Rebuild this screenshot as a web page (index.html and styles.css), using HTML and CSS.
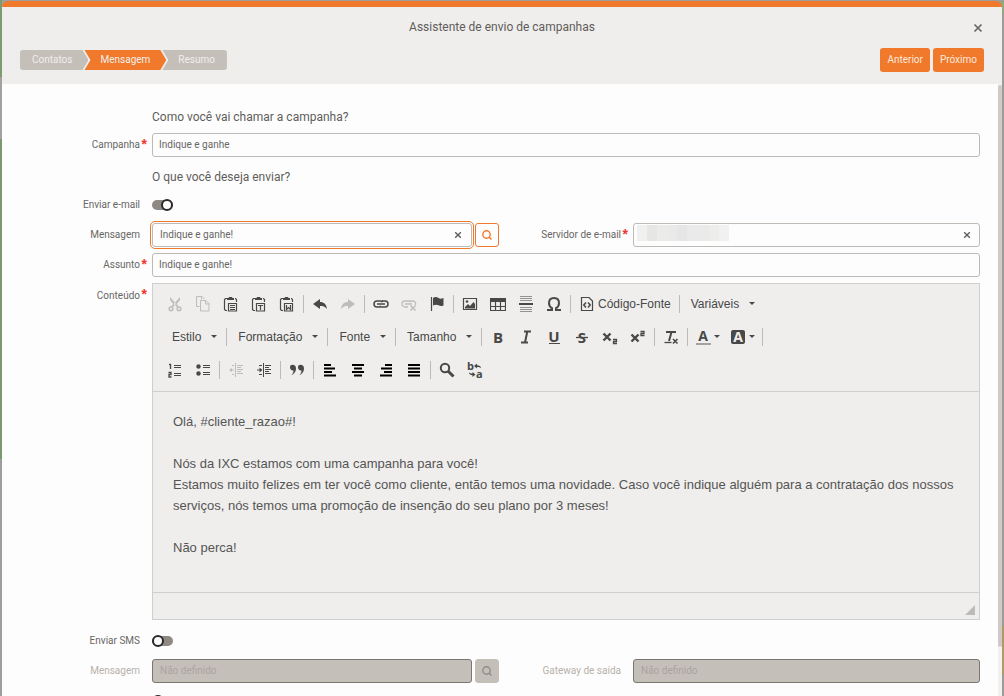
FILE: index.html
```html
<!DOCTYPE html>
<html lang="pt-BR">
<head>
<meta charset="utf-8">
<meta name="viewport" content="width=device-width, initial-scale=1">
<title>Assistente de envio de campanhas</title>
<link rel="stylesheet" href="styles.css">
</head>
<body class="page">
<svg class="sprite" aria-hidden="true">
  <symbol id="close" viewBox="0 0 10 10"><path d="M1.500 1.500l7 7M8.500 1.500l-7 7" fill="none" stroke="currentColor" stroke-width="1.700"/></symbol>
  <symbol id="search" viewBox="0 0 12 12"><circle cx="5.500" cy="5.500" r="3.700" fill="none" stroke="currentColor" stroke-width="1.400"/><path d="M8 8l2.500 2.500" stroke="currentColor" stroke-width="1.500"/></symbol>
  <symbol id="cut" viewBox="0 0 16 16"><path d="M3 1v3l4.500 5.500L9.200 8zM13 1v3L8.500 9.500 6.800 8z" fill="currentColor"/><path d="M7 8.500l-2 2.500M9 8.500l2 2.500" stroke="currentColor" stroke-width="1.800"/><circle cx="4" cy="12.800" r="1.900" fill="none" stroke="currentColor" stroke-width="1.500"/><circle cx="12" cy="12.800" r="1.900" fill="none" stroke="currentColor" stroke-width="1.500"/></symbol>
  <symbol id="copy" viewBox="0 0 16 16"><path d="M4.500 10.500h-3v-10h5.500l2.500 2.500M5.500 4.500h5.500l3 3v7.500h-8.500zM10.500 4.500v3.500h3.500M6.500.5v3" fill="none" stroke="currentColor"/></symbol>
  <symbol id="clip" viewBox="0 0 16 16"><path d="M4 2.500H2.500L1.500 3.500v10l1 1H4M12 2.500h.5l1 1V6" fill="none" stroke="currentColor" stroke-width="1.200"/><path d="M4 4V2h1.500L6 1h3l.5 1H11v2z" fill="currentColor"/><path d="M5.500 7.500h8v7.500h-8z" fill="none" stroke="currentColor" stroke-width="1.200"/></symbol>
  <symbol id="paste" viewBox="0 0 16 16"><use href="#clip"/><path d="M7 9.500h5M7 11.500h5M7 13.500h5" stroke="currentColor"/></symbol>
  <symbol id="paste-text" viewBox="0 0 16 16"><use href="#clip"/><path d="M7 9.500h5M9.500 9.500v4.500" stroke="currentColor" stroke-width="1.200"/></symbol>
  <symbol id="paste-word" viewBox="0 0 16 16"><use href="#clip"/><path d="M7.500 9v4.500l2-2 2 2V9" fill="none" stroke="currentColor" stroke-width="1.200"/></symbol>
  <symbol id="undo" viewBox="0 0 16 16"><path d="M1 8l7-5v3c4 0 6.500 2.500 7 7-2-2.500-4-3-7-3v3z" fill="currentColor"/></symbol>
  <symbol id="redo" viewBox="0 0 16 16"><path d="M15 8L8 3v3c-4 0-6.500 2.500-7 7 2-2.500 4-3 7-3v3z" fill="currentColor"/></symbol>
  <symbol id="link" viewBox="0 0 16 16"><path d="M7 11H4a3 3 0 010-6h3.500a2.600 2.600 0 012 1M9 5h3a3 3 0 010 6H8.500a2.600 2.600 0 01-2-1" fill="none" stroke="currentColor" stroke-width="1.500"/><path d="M4 8h8" stroke="currentColor" stroke-width="1.500"/></symbol>
  <symbol id="unlink" viewBox="0 0 16 16"><path d="M7 11H4a3 3 0 010-6h3.500a2.600 2.600 0 012 1M9 5h3a3 3 0 012.500 4M4 8h7" fill="none" stroke="currentColor" stroke-width="1.300"/><path d="M9.500 9.500l5 5M14.500 9.500l-5 5" stroke="currentColor" stroke-width="1.500"/></symbol>
  <symbol id="flag" viewBox="0 0 16 16"><path d="M2.500 1v14" stroke="currentColor" stroke-width="1.200"/><path d="M4 2c2-1.500 4-1 5.500 0s3 .7 5 0v7.500c-2 1-3.500.7-5-.2S6 8.500 4 9.500z" fill="currentColor"/></symbol>
  <symbol id="image" viewBox="0 0 16 16"><path d="M1.500 2.500h13v11h-13z" fill="none" stroke="currentColor" stroke-width="1.200"/><path d="M3 12.500V11l3-3 2 2 3.500-4L13 8v4.500z" fill="currentColor"/><circle cx="5" cy="5.500" r="1.300" fill="currentColor"/></symbol>
  <symbol id="table" viewBox="0 0 16 16"><path d="M.5 2.500h15v12H.5zM.5 10.500h15M5.500 5v9.500M10.500 5v9.500" fill="none" stroke="currentColor" stroke-width="1.200"/><path d="M0 2h16v4H0z" fill="currentColor"/></symbol>
  <symbol id="rule" viewBox="0 0 16 16"><path d="M2 .5h12M2 2.500h12M2 4.500h12M2 11.500h12M2 13.500h12M2 15.500h12" stroke="currentColor" opacity=".55"/><path d="M1 8h14" stroke="currentColor" stroke-width="2"/></symbol>
  <symbol id="omega" viewBox="0 0 16 16"><path d="M1 14h5v-1.800C4 11 3 9.500 3 7.200 3 4 5 2 8 2s5 2 5 5.200c0 2.300-1 3.800-3 5V14h5" fill="none" stroke="currentColor" stroke-width="2"/></symbol>
  <symbol id="source" viewBox="0 0 16 16"><path d="M2.500 1.500h7.500l3.500 3.500v9.500h-11z" fill="none" stroke="currentColor" stroke-width="1.200"/><path d="M7 6.500L4.800 9 7 11.500M9 6.500L11.200 9 9 11.500" fill="none" stroke="currentColor" stroke-width="1.500"/></symbol>
  <symbol id="italic" viewBox="0 0 16 16"><path d="M6 2.500h7M3 13.500h7M9.300 2.500l-2.300 11" stroke="currentColor" stroke-width="2"/></symbol>
  <symbol id="sub" viewBox="0 0 16 16"><path d="M1.500 4.500l7 7M8.500 4.500l-7 7" stroke="currentColor" stroke-width="2.400"/><path d="M11 10.500h3.500v2h-3v2H15" fill="none" stroke="currentColor" stroke-width="1.300"/></symbol>
  <symbol id="sup" viewBox="0 0 16 16"><path d="M1.500 5.500l7 7M8.500 5.500l-7 7" stroke="currentColor" stroke-width="2.400"/><path d="M10.500 2.500H14v2h-3v2h3.500" fill="none" stroke="currentColor" stroke-width="1.300"/></symbol>
  <symbol id="clear" viewBox="0 0 16 16"><path d="M3 3h10M8.500 3L6 12" stroke="currentColor" stroke-width="2"/><path d="M1.500 13.500h7" stroke="currentColor" stroke-width="1.300"/><path d="M10 10l4.500 4.500M14.500 10L10 14.500" stroke="currentColor" stroke-width="1.600"/></symbol>
  <symbol id="ordered" viewBox="0 0 16 16"><path d="M2 2.500h1.500V7M1.500 10.500H4v2H2v2.500h2.500" fill="none" stroke="currentColor" stroke-width="1.300"/><path d="M7 3.500h7M7 5.500h7M7 11.500h7M7 13.500h7" stroke="currentColor" stroke-width="1.200"/></symbol>
  <symbol id="bullets" viewBox="0 0 16 16"><circle cx="3.500" cy="4.500" r="2.200" fill="currentColor"/><circle cx="3.500" cy="11.500" r="2.200" fill="currentColor"/><path d="M8 3.500h7M8 5.500h7M8 10.500h7M8 12.500h7" stroke="currentColor" stroke-width="1.200"/></symbol>
  <symbol id="outdent" viewBox="0 0 16 16"><path d="M7.500 1v14" stroke="currentColor"/><path d="M9 3.500h6M9 5.500h4M9 7.500h6M9 9.500h4M9 11.500h6M4 3.500h2M4 12.500h2M2 8h4" stroke="currentColor"/><path d="M1 8l3-2v4z" fill="currentColor"/></symbol>
  <symbol id="indent" viewBox="0 0 16 16"><path d="M7.500 1v14" stroke="currentColor"/><path d="M9 3.500h6M9 5.500h4M9 7.500h6M9 9.500h4M9 11.500h6M3 3.500h3M3 12.500h3M1 8h4" stroke="currentColor"/><path d="M6.500 8l-3-2.500v5z" fill="currentColor"/></symbol>
  <symbol id="quote" viewBox="0 0 16 16"><path d="M1 5.300C1 3.500 2.200 2.800 3.700 2.800 5.500 2.800 7 4 7 6.500c0 3-1.800 5.500-4.500 6.700 1.300-1.500 2-3 2-4.700C2.500 8.800 1 7.500 1 5.300zM9 5.300c0-1.800 1.200-2.500 2.700-2.500 1.800 0 3.300 1.200 3.300 3.700 0 3-1.800 5.500-4.500 6.700 1.300-1.500 2-3 2-4.700C10.500 8.800 9 7.500 9 5.300z" fill="currentColor"/></symbol>
  <symbol id="left" viewBox="0 0 16 16"><path d="M2 3h7M2 6.500h11M2 10h8M2 13.500h12" stroke="#000" stroke-width="2"/></symbol>
  <symbol id="center" viewBox="0 0 16 16"><path d="M2 3h12M4 6.500h8M2 10h12M4 13.500h8" stroke="#000" stroke-width="2"/></symbol>
  <symbol id="right" viewBox="0 0 16 16"><path d="M7 3h7M3 6.500h11M6 10h8M2 13.500h12" stroke="#000" stroke-width="2"/></symbol>
  <symbol id="justify" viewBox="0 0 16 16"><path d="M2 3h12M2 6.500h12M2 10h12M2 13.500h12" stroke="#000" stroke-width="2"/></symbol>
  <symbol id="find" viewBox="0 0 16 16"><circle cx="6" cy="6" r="4.200" fill="none" stroke="currentColor" stroke-width="2"/><path d="M9 9l5.500 5.500" stroke="currentColor" stroke-width="3"/></symbol>
</svg>

<main class="modal">
  <header class="modal-header">
    <div class="title-row">
      <h1 class="title">Assistente de envio de campanhas</h1>
      <button class="plain-button" type="button" aria-label="Fechar"><svg class="close-icon"><use href="#close"/></svg></button>
    </div>
    <div class="nav-row">
      <ol class="steps">
        <li class="step step--first">Contatos</li>
        <li class="step step--active" aria-current="step">Mensagem</li>
        <li class="step step--last">Resumo</li>
      </ol>
      <div class="actions">
        <button class="primary" type="button">Anterior</button>
        <button class="primary" type="button">Próximo</button>
      </div>
    </div>
  </header>
  <div class="modal-body">
    <form class="form">
      <h2 class="question">Como você vai chamar a campanha?</h2>
      <label class="label" for="campanha">Campanha<span class="required">*</span></label>
      <input class="field field--wide" id="campanha" value="Indique e ganhe" required>

      <h2 class="question">O que você deseja enviar?</h2>
      <label class="label" for="email">Enviar e-mail</label>
      <div class="switch-cell"><input class="switch" id="email" type="checkbox" role="switch" checked></div>

      <label class="label" for="mensagem">Mensagem</label>
      <div class="lookup">
        <div class="combo combo--focus">
          <input class="combo-input" id="mensagem" value="Indique e ganhe!">
          <button class="plain-button" type="button" aria-label="Limpar mensagem"><svg class="clear-icon"><use href="#close"/></svg></button>
        </div>
        <button class="search-button" type="button" aria-label="Buscar mensagem"><svg class="search-icon"><use href="#search"/></svg></button>
      </div>
      <label class="label" for="servidor">Servidor de e-mail<span class="required">*</span></label>
      <div class="combo">
        <input class="combo-input combo-input--masked" id="servidor" required>
        <button class="plain-button" type="button" aria-label="Limpar servidor"><svg class="clear-icon"><use href="#close"/></svg></button>
      </div>

      <label class="label" for="assunto">Assunto<span class="required">*</span></label>
      <input class="field field--wide" id="assunto" value="Indique e ganhe!" required>

      <span class="label label--editor" id="conteudo-label">Conteúdo<span class="required">*</span></span>
      <section class="editor">
        <div class="toolbar" role="toolbar" aria-label="Ferramentas do editor">
          <div class="tool-row">
            <button class="tool" type="button" aria-label="Recortar" disabled><svg class="icon"><use href="#cut"/></svg></button>
            <button class="tool" type="button" aria-label="Copiar" disabled><svg class="icon"><use href="#copy"/></svg></button>
            <button class="tool" type="button" aria-label="Colar"><svg class="icon"><use href="#paste"/></svg></button>
            <button class="tool" type="button" aria-label="Colar como texto"><svg class="icon"><use href="#paste-text"/></svg></button>
            <button class="tool" type="button" aria-label="Colar do Word"><svg class="icon"><use href="#paste-word"/></svg></button>
            <span class="divider"></span>
            <button class="tool" type="button" aria-label="Desfazer"><svg class="icon"><use href="#undo"/></svg></button>
            <button class="tool" type="button" aria-label="Refazer" disabled><svg class="icon"><use href="#redo"/></svg></button>
            <span class="divider"></span>
            <button class="tool" type="button" aria-label="Link"><svg class="icon"><use href="#link"/></svg></button>
            <button class="tool" type="button" aria-label="Remover link" disabled><svg class="icon"><use href="#unlink"/></svg></button>
            <button class="tool" type="button" aria-label="Âncora"><svg class="icon"><use href="#flag"/></svg></button>
            <span class="divider"></span>
            <button class="tool" type="button" aria-label="Imagem"><svg class="icon"><use href="#image"/></svg></button>
            <button class="tool" type="button" aria-label="Tabela"><svg class="icon"><use href="#table"/></svg></button>
            <button class="tool" type="button" aria-label="Linha horizontal"><svg class="icon"><use href="#rule"/></svg></button>
            <button class="tool" type="button" aria-label="Caractere especial"><svg class="icon"><use href="#omega"/></svg></button>
            <span class="divider"></span>
            <button class="tool tool--source" type="button"><svg class="icon"><use href="#source"/></svg>Código-Fonte</button>
            <span class="divider"></span>
            <button class="tool tool--menu" type="button">Variáveis<span class="caret"></span></button>
          </div>
          <div class="tool-row tool-row--menus">
            <button class="tool tool--menu" type="button">Estilo<span class="caret"></span></button>
            <span class="divider"></span>
            <button class="tool tool--menu" type="button">Formatação<span class="caret"></span></button>
            <span class="divider"></span>
            <button class="tool tool--menu" type="button">Fonte<span class="caret"></span></button>
            <span class="divider"></span>
            <button class="tool tool--menu" type="button">Tamanho<span class="caret"></span></button>
            <span class="divider"></span>
            <button class="tool" type="button" aria-label="Negrito"><svg class="icon" viewBox="0 0 16 16"><text class="glyph" x="8" y="14" text-anchor="middle">B</text></svg></button>
            <button class="tool" type="button" aria-label="Itálico"><svg class="icon"><use href="#italic"/></svg></button>
            <button class="tool" type="button" aria-label="Sublinhado"><svg class="icon" viewBox="0 0 16 16"><text class="glyph" x="8" y="13" text-anchor="middle">U</text><path d="M3 14.500h11" stroke="currentColor"/></svg></button>
            <button class="tool" type="button" aria-label="Tachado"><svg class="icon" viewBox="0 0 16 16"><text class="glyph" x="8" y="14" text-anchor="middle">S</text><path d="M2 8.500h12" stroke="currentColor" stroke-width="1.300"/></svg></button>
            <button class="tool" type="button" aria-label="Subscrito"><svg class="icon"><use href="#sub"/></svg></button>
            <button class="tool" type="button" aria-label="Sobrescrito"><svg class="icon"><use href="#sup"/></svg></button>
            <span class="divider"></span>
            <button class="tool" type="button" aria-label="Remover formatação"><svg class="icon"><use href="#clear"/></svg></button>
            <span class="divider"></span>
            <button class="tool tool--color" type="button" aria-label="Cor do texto"><svg class="icon" viewBox="0 0 16 16"><text class="glyph glyph--small" x="8" y="12" text-anchor="middle">A</text><path d="M1 15h15" stroke="#a3a2a1" stroke-width="2"/></svg><span class="caret"></span></button>
            <button class="tool tool--color" type="button" aria-label="Cor do plano de fundo"><svg class="icon" viewBox="0 0 16 16"><rect x="1" y="1" width="14" height="14" rx="2" fill="currentColor"/><text class="glyph glyph--small glyph--light" x="8" y="13" text-anchor="middle">A</text></svg><span class="caret"></span></button>
            <span class="divider"></span>
          </div>
          <div class="tool-row">
            <button class="tool" type="button" aria-label="Lista numerada"><svg class="icon"><use href="#ordered"/></svg></button>
            <button class="tool" type="button" aria-label="Lista sem números"><svg class="icon"><use href="#bullets"/></svg></button>
            <span class="divider"></span>
            <button class="tool" type="button" aria-label="Diminuir recuo" disabled><svg class="icon"><use href="#outdent"/></svg></button>
            <button class="tool" type="button" aria-label="Aumentar recuo"><svg class="icon"><use href="#indent"/></svg></button>
            <span class="divider"></span>
            <button class="tool" type="button" aria-label="Citação"><svg class="icon"><use href="#quote"/></svg></button>
            <span class="divider"></span>
            <button class="tool" type="button" aria-label="Alinhar à esquerda"><svg class="icon"><use href="#left"/></svg></button>
            <button class="tool" type="button" aria-label="Centralizar"><svg class="icon"><use href="#center"/></svg></button>
            <button class="tool" type="button" aria-label="Alinhar à direita"><svg class="icon"><use href="#right"/></svg></button>
            <button class="tool" type="button" aria-label="Justificar"><svg class="icon"><use href="#justify"/></svg></button>
            <span class="divider"></span>
            <button class="tool" type="button" aria-label="Localizar"><svg class="icon"><use href="#find"/></svg></button>
            <button class="tool" type="button" aria-label="Substituir"><svg class="icon" viewBox="0 0 16 16"><text class="glyph glyph--tiny" x="0" y="8">b</text><text class="glyph glyph--tiny" x="9" y="16">a</text><path d="M7 4l3-2.500v1.700c2.500 0 3.700.8 4 3-1-1-2-1.300-4-1.300v1.600zM8.500 12.500l-3-2.500v1.600c-1.700 0-2.700-.4-3.500-1.300 0 2 1.500 3 3.500 3V15z" fill="currentColor"/></svg></button>
          </div>
        </div>
        <div class="editor-text" contenteditable="true" role="textbox" aria-multiline="true" aria-labelledby="conteudo-label">
          <p>Olá, #cliente_razao#!</p>
          <p>Nós da IXC estamos com uma campanha para você!<br>Estamos muito felizes em ter você como cliente, então temos uma novidade. Caso você indique alguém para a contratação dos nossos serviços, nós temos uma promoção de insenção do seu plano por 3 meses!</p>
          <p>Não perca!</p>
        </div>
        <div class="editor-footer"><span class="resize-grip"></span></div>
      </section>

      <label class="label" for="sms">Enviar SMS</label>
      <div class="switch-cell"><input class="switch" id="sms" type="checkbox" role="switch"></div>

      <label class="label label--disabled" for="sms-mensagem">Mensagem</label>
      <div class="lookup">
        <div class="combo combo--disabled"><input class="combo-input" id="sms-mensagem" placeholder="Não definido" disabled></div>
        <button class="search-button" type="button" aria-label="Buscar mensagem de SMS" disabled><svg class="search-icon"><use href="#search"/></svg></button>
      </div>
      <label class="label label--disabled" for="gateway">Gateway de saída</label>
      <div class="combo combo--disabled"><input class="combo-input" id="gateway" placeholder="Não definido" disabled></div>

      <div class="switch-cell"><input class="switch" type="checkbox" role="switch" aria-label="Próximo canal de envio"></div>
    </form>
    <div class="scroll-track"><div class="scroll-thumb"></div></div>
  </div>
</main>
</body>
</html>
```
FILE: styles.css
```css
*, *::before { box-sizing: border-box; }

.page {
  margin: 0;
  height: 100vh;
  padding: 1px 2px 0;
  overflow: hidden;
  display: flex;
  font: 10px/14px Roboto, "Liberation Sans", sans-serif;
  color: #686664;
  background:
    linear-gradient(#7e9b70 0 11%, #a3a19f 11% 20%, #7b9870 20% 66%, #9d9d9a 66%) left / 2px 100% no-repeat,
    linear-gradient(#92a880 0 2%, #9c9b99 2% 90%, #b1986b 90% 97%, #9c9b99 97%) right / 2px 100% no-repeat,
    #a09c97;
}

.sprite { position: absolute; width: 0; height: 0; }

button, input { font: inherit; color: inherit; }
button { padding: 0; border: 0; background: none; }
svg { display: block; flex: none; }

.modal {
  flex: 1;
  min-width: 0;
  display: flex;
  flex-direction: column;
  overflow: hidden;
  border-top: 6px solid #f0792b;
  border-radius: 6px 6px 0 0;
  background: #fdfdfd;
}

.modal-header { padding: 11px 18px 12px; background: #efeeec; }
.title-row { display: grid; grid-template-columns: 1fr auto 1fr; align-items: center; height: 18px; }
.title { grid-column: 2; margin: 0; font-size: 12px; font-weight: 400; line-height: 18px; color: #5f5d5b; }
.title-row .plain-button { justify-self: end; }
.plain-button { display: flex; }
.close-icon { width: 10px; height: 10px; margin: 2px 1px 0; color: #6a6866; }

.nav-row { display: flex; align-items: center; justify-content: space-between; margin-top: 12px; }
.steps { display: flex; margin: 0; padding: 0; list-style: none; color: #efeeec; }
.step { height: 20px; padding: 0 16px; line-height: 20px; background: #c5bfba; }
.step + .step { margin-left: -4px; }
.step--first { padding-left: 12px; border-radius: 3px 0 0 3px; clip-path: polygon(0 0, calc(100% - 6px) 0, 100% 50%, calc(100% - 6px) 100%, 0 100%); }
.step--active { background: #f0792b; clip-path: polygon(0 0, calc(100% - 6px) 0, 100% 50%, calc(100% - 6px) 100%, 0 100%, 6px 50%); }
.step--last { padding-right: 12px; border-radius: 0 3px 3px 0; clip-path: polygon(0 0, 100% 0, 100% 100%, 0 100%, 6px 50%); }
.actions { display: flex; gap: 3px; }
.primary { height: 24px; padding: 0 7px; border-radius: 3px; color: #fbe9dd; background: #f0792b; }

.modal-body { flex: 1; min-height: 0; display: flex; }
.form {
  flex: 1;
  min-width: 0;
  display: grid;
  grid-template-columns: 150px minmax(0, 1fr) 134px minmax(0, 1fr);
  grid-auto-rows: min-content;
  row-gap: 6px;
  padding: 19px 18px 0 0;
}
.question { grid-column: 2 / -1; height: 24px; margin: 0; padding-top: 4px; font-size: 12px; font-weight: 400; line-height: 20px; color: #5f5d5b; }
.label { position: relative; height: 24px; padding-right: 12px; line-height: 24px; text-align: right; }
.label--disabled { color: #b8b1ab; }
.label--editor { padding-top: 1px; }
.required { position: absolute; top: -1px; right: 5px; font: 700 14px/24px "Liberation Sans", Arial, sans-serif; color: #f0352c; }

.field, .combo {
  height: 24px;
  border: 1px solid #bfbab5;
  border-radius: 3px;
  background: #fdfdfd;
}
.field { width: 100%; padding: 0 6px 1px; outline: 0; }
.field--wide { grid-column: 2 / -1; }
.combo { display: flex; align-items: center; flex: 1; min-width: 0; padding-right: 8px; }
.combo--focus { padding-right: 9px; outline: 1px solid #f0792b; outline-offset: 1px; }
.combo-input { flex: 1; min-width: 0; height: 22px; padding: 0 7px 1px; border: 0; outline: 0; background: none; }
.combo-input--masked {
  background: linear-gradient(90deg, #f0f0f0 0 10px, #e6e6e5 10px 20px, #ebebea 20px 30px, #eaeaea 30px 40px, #e6e6e6 40px 50px, #eaeaea 50px 72px, #ededec 72px 82px, #f1f1f1 82px) 3px 1px / 92px 16px no-repeat;
}
.combo--disabled { border-color: #7b7672; background: #c5bfba; }
.combo-input::placeholder { color: #aaa49f; opacity: 1; }
.clear-icon { width: 8px; height: 8px; color: #5f5d5b; }
.lookup { display: flex; gap: 3px; }
.search-button { display: flex; align-items: center; justify-content: center; width: 24px; height: 24px; border: 1px solid #f0792b; border-radius: 3px; color: #f0792b; }
.search-button:disabled { border-color: #c5bfba; color: #918b86; background: #c5bfba; }
.search-icon { width: 12px; height: 12px; }

.switch-cell { grid-column: 2 / -1; display: flex; align-items: center; height: 24px; }
.switch { appearance: none; display: flex; align-items: center; width: 21px; height: 10px; margin: 0; border-radius: 5px; background: #8f8984; }
.switch::before { content: ""; flex: none; width: 12px; height: 12px; border: 2px solid #2b2a29; border-radius: 50%; background: #fdfdfd; }
.switch:checked { justify-content: flex-end; }

.editor { grid-column: 2 / -1; margin-bottom: 3px; border: 1px solid #cfcfcf; background: #efeeec; }
.toolbar { padding: 3px 8px 5px; border-bottom: 1px solid #cfcfcf; font: 12px/16px "Liberation Sans", Arial, sans-serif; color: #484848; }
.tool-row { display: flex; align-items: center; height: 33px; }
.tool-row--menus { padding-left: 2px; }
.tool { display: flex; align-items: center; justify-content: center; flex: none; width: 28px; height: 28px; }
.tool:disabled { color: #bebdbc; }
.tool--source { width: auto; gap: 3px; padding: 0 6px; }
.tool--menu { width: auto; gap: 10px; padding: 0 7px 0 9px; }
.tool--color { width: 35px; gap: 3px; }
.icon { width: 16px; height: 16px; }
.divider { flex: none; width: 1px; height: 18px; margin: 0 2px; background: #bcbbba; }
.caret { width: 6px; border: 3px solid transparent; border-top-color: #484848; border-bottom: 0; }
.glyph { font: 700 15px "Open Sans", sans-serif; fill: currentColor; }
.glyph--small { font-size: 14px; }
.glyph--tiny { font-size: 11px; }
.glyph--light { fill: #efeeec; }

.editor-text { min-height: 200px; padding: 19px 20px; outline: 0; font: 13px/21px "Liberation Sans", Arial, sans-serif; color: #555; }
.editor-text p { margin: 0 0 21px; }
.editor-text p:last-child { margin: 0; }
.editor-footer { display: flex; align-items: flex-end; justify-content: flex-end; height: 27px; padding: 4px; border-top: 1px solid #cfcfcf; }
.resize-grip { border: 5px solid #bcbbba; border-top-color: transparent; border-left-color: transparent; }

.scroll-track { flex: none; width: 4px; padding-top: 1px; background: #f2f1ef; }
.scroll-thumb { height: 92%; border-radius: 2px; background: #cfcac6; }
```
